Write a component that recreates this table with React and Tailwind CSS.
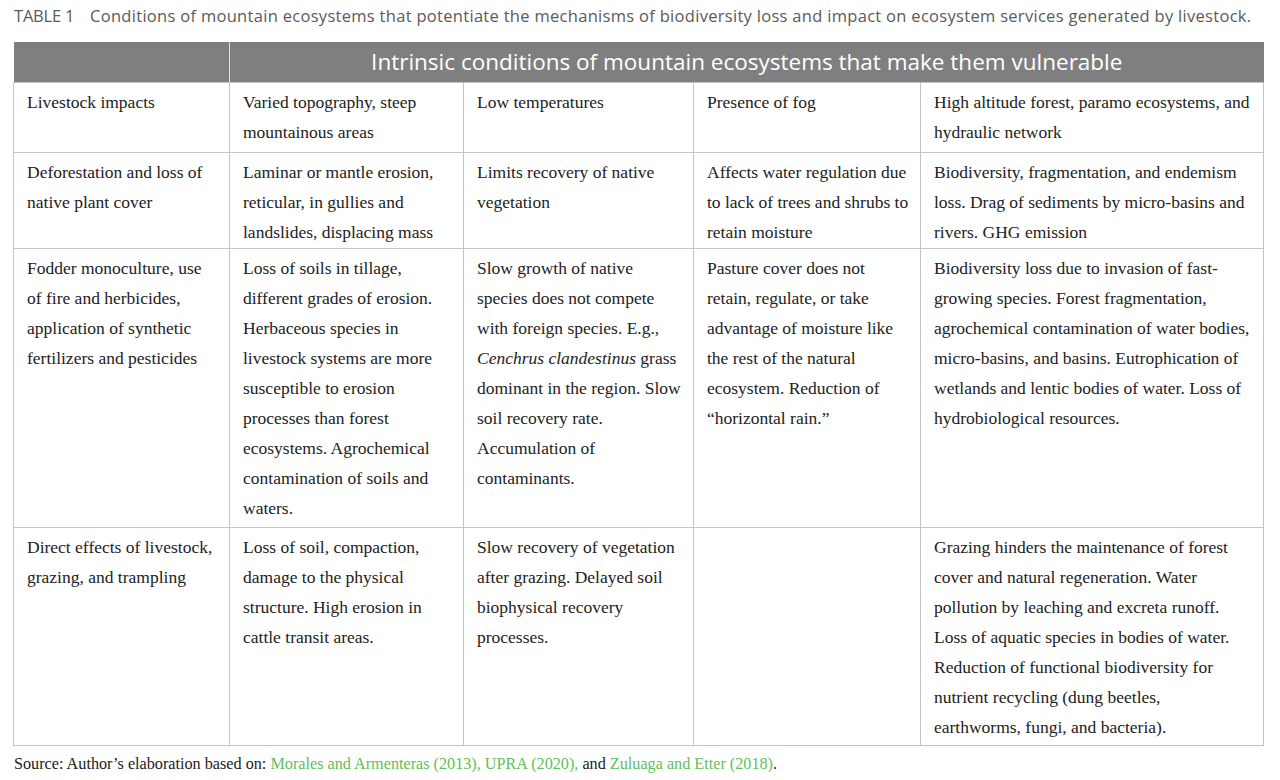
const HEAD = [
  ['Livestock impacts'],
  ['Varied topography, steep', 'mountainous areas'],
  ['Low temperatures'],
  ['Presence of fog'],
  ['High altitude forest, paramo ecosystems, and', 'hydraulic network'],
]

const ROWS = [
  {
    h: 'h-[96px]',
    cells: [
      ['Deforestation and loss of', 'native plant cover'],
      ['Laminar or mantle erosion,', 'reticular, in gullies and', 'landslides, displacing mass'],
      ['Limits recovery of native', 'vegetation'],
      ['Affects water regulation due', 'to lack of trees and shrubs to', 'retain moisture'],
      ['Biodiversity, fragmentation, and endemism', 'loss. Drag of sediments by micro-basins and', 'rivers. GHG emission'],
    ],
  },
  {
    h: 'h-[279px]',
    cells: [
      ['Fodder monoculture, use', 'of fire and herbicides,', 'application of synthetic', 'fertilizers and pesticides'],
      [
        'Loss of soils in tillage,',
        'different grades of erosion.',
        'Herbaceous species in',
        'livestock systems are more',
        'susceptible to erosion',
        'processes than forest',
        'ecosystems. Agrochemical',
        'contamination of soils and',
        'waters.',
      ],
      [
        'Slow growth of native',
        'species does not compete',
        'with foreign species. E.g.,',
        <>
          <i>Cenchrus clandestinus</i> grass
        </>,
        'dominant in the region. Slow',
        'soil recovery rate.',
        'Accumulation of',
        'contaminants.',
      ],
      [
        'Pasture cover does not',
        'retain, regulate, or take',
        'advantage of moisture like',
        'the rest of the natural',
        'ecosystem. Reduction of',
        '\u201chorizontal rain.\u201d',
      ],
      [
        'Biodiversity loss due to invasion of fast-',
        'growing species. Forest fragmentation,',
        'agrochemical contamination of water bodies,',
        'micro-basins, and basins. Eutrophication of',
        'wetlands and lentic bodies of water. Loss of',
        'hydrobiological resources.',
      ],
    ],
  },
  {
    h: 'h-[218px]',
    cells: [
      ['Direct effects of livestock,', 'grazing, and trampling'],
      ['Loss of soil, compaction,', 'damage to the physical', 'structure. High erosion in', 'cattle transit areas.'],
      ['Slow recovery of vegetation', 'after grazing. Delayed soil', 'biophysical recovery', 'processes.'],
      [],
      [
        'Grazing hinders the maintenance of forest',
        'cover and natural regeneration. Water',
        'pollution by leaching and excreta runoff.',
        'Loss of aquatic species in bodies of water.',
        'Reduction of functional biodiversity for',
        'nutrient recycling (dung beetles,',
        'earthworms, fungi, and bacteria).',
      ],
    ],
  },
]

function Cell({ lines }) {
  return (
    <td className="border border-[#c4c4c4] px-[13px] pt-[4px] pb-0 align-top">
      {lines.map((l, i) => (
        <div key={i} className="whitespace-nowrap">
          {l}
        </div>
      ))}
    </td>
  )
}

export default function App() {
  return (
    <div className="w-[1280px] h-[780px] bg-white overflow-hidden">
      <p className="pl-[14px] pt-[4px] h-[42px] text-[16.5px] leading-[24px] text-[#5a5a5a] font-['Open_Sans','Noto_Sans',sans-serif] whitespace-nowrap tracking-[0.3px]">
        <span className="inline-block w-[76px] font-medium tracking-[-0.2px]">TABLE 1</span>Conditions of mountain
        ecosystems that potentiate the mechanisms of biodiversity loss and impact on ecosystem services generated by
        livestock.
      </p>
      <table className="ml-[13px] w-[1250px] table-fixed border-collapse font-['Liberation_Serif',serif] text-[17.5px] leading-[30px] text-[#222]">
        <colgroup>
          <col className="w-[216px]" />
          <col className="w-[234px]" />
          <col className="w-[230px]" />
          <col className="w-[227px]" />
          <col className="w-[343px]" />
        </colgroup>
        <tbody>
          <tr className="h-[40px] bg-[#7f7f7f]">
            <td className="border-r border-[#e0e0e0]" />
            <td
              colSpan={4}
              className="text-center text-white text-[22.5px] font-['Open_Sans','Noto_Sans',sans-serif] leading-[40px]"
            >
              Intrinsic conditions of mountain ecosystems that make them vulnerable
            </td>
          </tr>
          <tr className="h-[70px]">
            {HEAD.map((c, i) => (
              <Cell key={i} lines={c} />
            ))}
          </tr>
          {ROWS.map((r, i) => (
            <tr key={i} className={r.h}>
              {r.cells.map((c, j) => (
                <Cell key={j} lines={c} />
              ))}
            </tr>
          ))}
        </tbody>
      </table>
      <p className="pl-[14px] pt-[6px] font-['Liberation_Serif',serif] text-[16.2px] leading-[24px] text-[#222] whitespace-nowrap">
        Source: Author&rsquo;s elaboration based on:{' '}
        <span className="text-[#5fbf5a]">Morales and Armenteras (2013), UPRA (2020),</span> and{' '}
        <span className="text-[#5fbf5a]">Zuluaga and Etter (2018)</span>.
      </p>
    </div>
  )
}
